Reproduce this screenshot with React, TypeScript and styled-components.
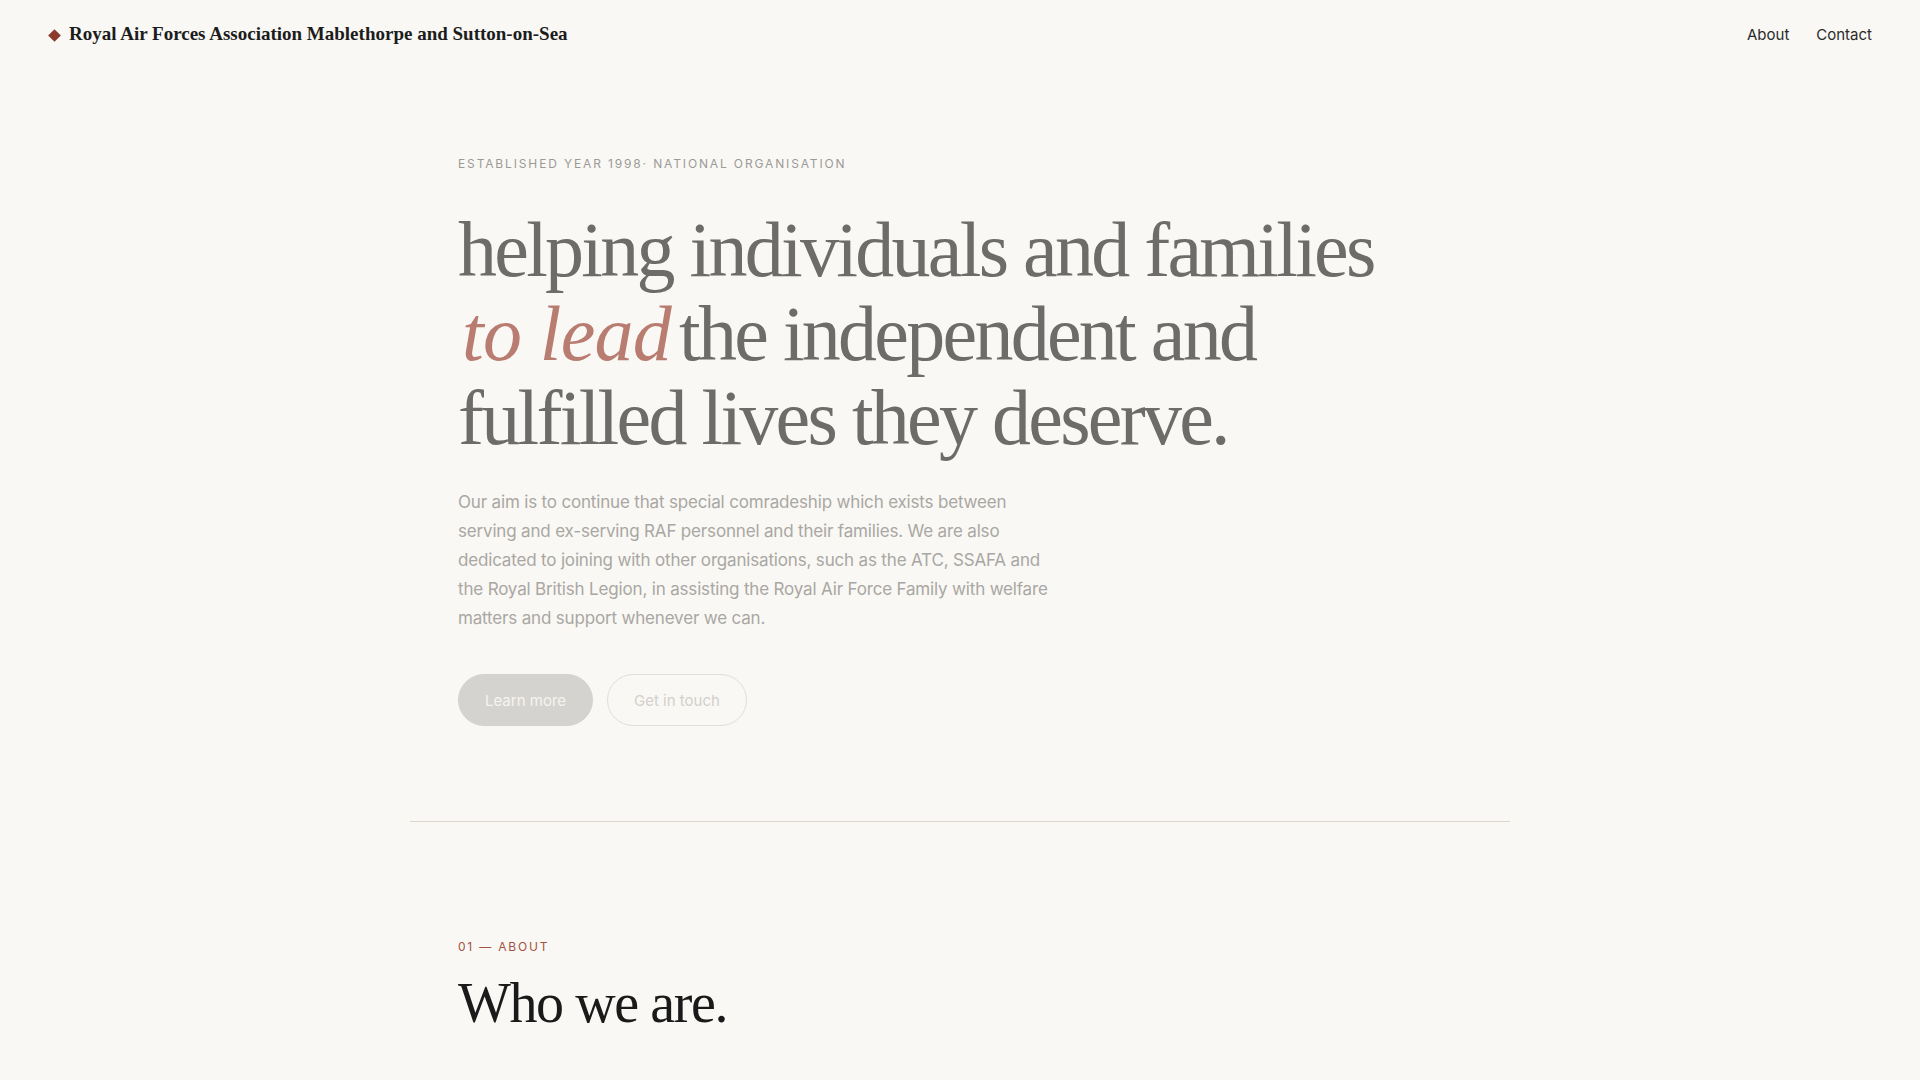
import styled, { createGlobalStyle } from 'styled-components';

const GlobalStyle = createGlobalStyle`
  html, body {
    margin: 0;
    padding: 0;
    background: #f9f8f4;
  }
  body {
    font-family: 'Inter', 'Liberation Sans', sans-serif;
    color: #1c1c1c;
    -webkit-font-smoothing: antialiased;
  }
  * { box-sizing: border-box; }
`;

const Header = styled.header`
  display: flex;
  justify-content: space-between;
  align-items: center;
  height: 68px;
  padding: 0 48px;
`;

const Brand = styled.a`
  display: flex;
  align-items: center;
  gap: 8px;
  font-family: 'Liberation Serif', 'Times New Roman', serif;
  font-weight: 700;
  font-size: 19px;
  color: #1c1c1c;
  text-decoration: none;
`;

const Diamond = styled.span`
  width: 9px;
  height: 9px;
  background: #8b3a2b;
  transform: rotate(45deg);
  margin: 2px 2px 0 2px;
`;

const Nav = styled.nav`
  display: flex;
  gap: 27px;
`;

const NavLink = styled.a`
  font-size: 15px;
  color: #2a2a2a;
  text-decoration: none;
`;

const Container = styled.div`
  max-width: 1100px;
  margin: 0 auto;
`;

const Hero = styled.section`
  padding: 88px 48px 95px;
  border-bottom: 1px solid #ddd6c9;
`;

const Eyebrow = styled.p<{ $accent?: boolean }>`
  margin: 0;
  font-size: 12px;
  line-height: 16px;
  letter-spacing: ${(p) => (p.$accent ? '0.15em' : '0.155em')};
  text-transform: uppercase;
  color: ${(p) => (p.$accent ? '#a4523f' : '#9c9a96')};
`;

const Headline = styled.h1`
  margin: 36px 0 0;
  font-family: 'Liberation Serif', 'Times New Roman', serif;
  font-weight: 400;
  font-size: 78px;
  line-height: 84px;
  letter-spacing: -0.035em;
  color: #6d6c69;

  em {
    color: #b97c70;
    font-style: italic;
    letter-spacing: -0.01em;
    padding: 0 8px 0 4px;
  }
`;

const Lead = styled.p`
  margin: 28px 0 0;
  max-width: 600px;
  font-size: 17px;
  line-height: 29px;
  letter-spacing: -0.01em;
  color: #a9a7a3;
`;

const Actions = styled.div`
  display: flex;
  gap: 14px;
  margin-top: 41px;
`;

const Button = styled.a<{ $solid?: boolean }>`
  display: inline-flex;
  align-items: center;
  height: 52px;
  padding: 0 26px;
  border-radius: 999px;
  font-size: 15px;
  text-decoration: none;
  border: 1px solid ${(p) => (p.$solid ? '#d5d3cf' : '#e2dfda')};
  background: ${(p) => (p.$solid ? '#d5d3cf' : 'transparent')};
  color: ${(p) => (p.$solid ? '#f6f4f0' : '#d3d0cb')};
`;

const Section = styled.section`
  padding: 117px 48px 80px;
`;

const SectionTitle = styled.h2`
  margin: 18px 0 0;
  font-family: 'Liberation Serif', 'Times New Roman', serif;
  font-weight: 400;
  font-size: 56px;
  line-height: 1.1;
  letter-spacing: -0.025em;
  color: #1a1a1a;
`;

export default function App() {
  return (
    <>
      <GlobalStyle />
      <Header>
        <Brand href="#">
          <Diamond />
          Royal Air Forces Association Mablethorpe and Sutton-on-Sea
        </Brand>
        <Nav>
          <NavLink href="#about">About</NavLink>
          <NavLink href="#contact">Contact</NavLink>
        </Nav>
      </Header>
      <Container>
        <Hero>
          <Eyebrow>Established year 1998· National organisation</Eyebrow>
          <Headline>
            helping individuals and families
            <br />
            <em>to lead</em>the independent and
            <br />
            fulfilled lives they deserve.
          </Headline>
          <Lead>
            Our aim is to continue that special comradeship which exists between serving and
            ex-serving RAF personnel and their families. We are also dedicated to joining with
            other organisations, such as the ATC, SSAFA and the Royal British Legion, in assisting
            the Royal Air Force Family with welfare matters and support whenever we can.
          </Lead>
          <Actions>
            <Button $solid href="#about">Learn more</Button>
            <Button href="#contact">Get in touch</Button>
          </Actions>
        </Hero>
        <Section id="about">
          <Eyebrow $accent>01 — About</Eyebrow>
          <SectionTitle>Who we are.</SectionTitle>
        </Section>
      </Container>
    </>
  );
}
